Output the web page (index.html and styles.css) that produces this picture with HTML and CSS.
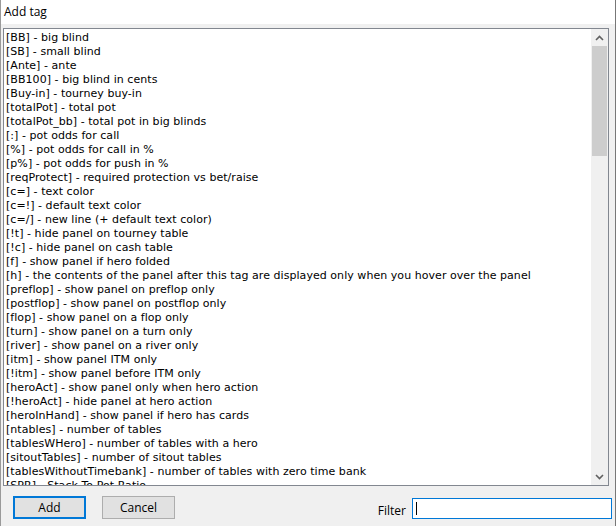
FILE: index.html
```html
<!DOCTYPE html>
<html>
<head>
<meta charset="utf-8">
<link rel="stylesheet" href="styles.css">
</head>
<body>
<div class="window">
  <div class="titlebar">Add tag</div>
  <div class="listbox">
    <div class="items">
      <div>[BB] - big blind</div>
      <div>[SB] - small blind</div>
      <div>[Ante] - ante</div>
      <div>[BB100] - big blind in cents</div>
      <div>[Buy-in] - tourney buy-in</div>
      <div>[totalPot] - total pot</div>
      <div>[totalPot_bb] - total pot in big blinds</div>
      <div>[:] - pot odds for call</div>
      <div>[%] - pot odds for call in %</div>
      <div>[p%] - pot odds for push in %</div>
      <div>[reqProtect] - required protection vs bet/raise</div>
      <div>[c=] - text color</div>
      <div>[c=!] - default text color</div>
      <div>[c=/] - new line (+ default text color)</div>
      <div>[!t] - hide panel on tourney table</div>
      <div>[!c] - hide panel on cash table</div>
      <div>[f] - show panel if hero folded</div>
      <div>[h] - the contents of the panel after this tag are displayed only when you hover over the panel</div>
      <div>[preflop] - show panel on preflop only</div>
      <div>[postflop] - show panel on postflop only</div>
      <div>[flop] - show panel on a flop only</div>
      <div>[turn] - show panel on a turn only</div>
      <div>[river] - show panel on a river only</div>
      <div>[itm] - show panel ITM only</div>
      <div>[!itm] - show panel before ITM only</div>
      <div>[heroAct] - show panel only when hero action</div>
      <div>[!heroAct] - hide panel at hero action</div>
      <div>[heroInHand] - show panel if hero has cards</div>
      <div>[ntables] - number of tables</div>
      <div>[tablesWHero] - number of tables with a hero</div>
      <div>[sitoutTables] - number of sitout tables</div>
      <div>[tablesWithoutTimebank] - number of tables with zero time bank</div>
      <div>[SPR] - Stack To Pot Ratio</div>
    </div>
    <div class="scrollbar">
      <div class="sb-btn"><svg width="9" height="6" viewBox="0 0 9 6"><path d="M1 5 L4.5 1.5 L8 5" fill="none" stroke="#606060" stroke-width="1.6"/></svg></div>
      <div class="sb-thumb"></div>
      <div class="sb-track"></div>
      <div class="sb-btn"><svg width="9" height="6" viewBox="0 0 9 6"><path d="M1 1 L4.5 4.5 L8 1" fill="none" stroke="#606060" stroke-width="1.6"/></svg></div>
    </div>
  </div>
  <div class="bottom">
    <button class="btn btn-default">Add</button>
    <button class="btn">Cancel</button>
    <div class="filter">
      <span class="filter-label">Filter</span>
      <div class="filter-input"><span class="caret"></span></div>
    </div>
  </div>
</div>
</body>
</html>
```
FILE: styles.css
```css
html, body {
  margin: 0;
  padding: 0;
  background: #f0f0f0;
}
.window {
  width: 614px;
  height: 526px;
  border-left: 1px solid #9a9a9a;
  border-right: 1px solid #777;
  background: #f0f0f0;
  display: flex;
  flex-direction: column;
  font-family: "Open Sans", "Noto Sans", sans-serif;
  font-size: 12px;
  color: #000;
}
.titlebar {
  height: 24px;
  background: #fff;
  padding-left: 3px;
  line-height: 24px;
  box-sizing: border-box;
}
.listbox {
  margin: 4px 6px 0 2px;
  height: 458px;
  box-sizing: border-box;
  border: 1px solid #828790;
  background: #fff;
  display: flex;
  overflow: hidden;
}
.items {
  flex: 1;
  padding: 2px 0 0 2px;
  font-family: "DejaVu Sans", sans-serif;
  font-size: 11px;
  letter-spacing: 0.05px;
  line-height: 14px;
  white-space: nowrap;
  overflow: hidden;
}
.scrollbar {
  width: 17px;
  display: flex;
  flex-direction: column;
  background: #f0f0f0;
}
.sb-btn {
  height: 17px;
  display: flex;
  align-items: center;
  justify-content: center;
}
.sb-thumb {
  height: 110px;
  margin: 0 1px;
  background: #cdcdcd;
}
.sb-track {
  flex: 1;
}
.bottom {
  display: flex;
  align-items: flex-start;
  padding: 10px 3px 0 12px;
}
.btn {
  width: 73px;
  height: 23px;
  box-sizing: border-box;
  border: 1px solid #adadad;
  background: #e1e1e1;
  font-family: "Open Sans", "Noto Sans", sans-serif;
  font-size: 12px;
  color: #000;
  padding: 0;
  margin: 0 16px 0 0;
}
.btn-default {
  border: 2px solid #0078d7;
}
.filter {
  margin-left: auto;
  display: flex;
  align-items: center;
  gap: 6px;
  margin-top: 2px;
}
.filter-label {
  font-size: 12px;
  padding-top: 3px;
}
.filter-input {
  width: 200px;
  height: 21px;
  box-sizing: border-box;
  border: 1px solid #0078d7;
  background: #fff;
  display: flex;
  align-items: center;
  padding-left: 3px;
}
.caret {
  width: 1px;
  height: 13px;
  background: #000;
}
```
